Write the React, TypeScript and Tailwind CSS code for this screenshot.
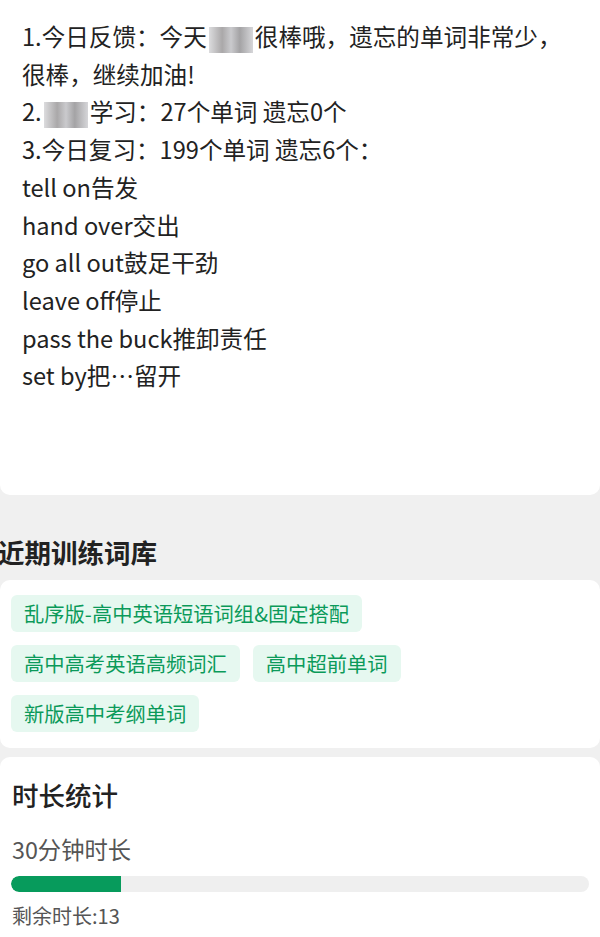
import React from 'react';

const reviewWords = [
  'tell on告发',
  'hand over交出',
  'go all out鼓足干劲',
  'leave off停止',
  'pass the buck推卸责任',
  'set by把…留开',
];

const wordBanks = ['乱序版-高中英语短语词组&固定搭配', '高中高考英语高频词汇', '高中超前单词', '新版高中考纲单词'];

// pixelated placeholder for the hidden name
const Blur: React.FC<{ w: number }> = ({ w }) => (
  <span
    className="inline-block align-middle h-[26px] mx-[2px] bg-[linear-gradient(90deg,#dcdcde_0%,#aaa8a9_30%,#cacacd_50%,#a4a3a5_70%,#d6d6d9_100%)]"
    style={{ width: w }}
  />
);

export default function App() {
  const used = 19;

  return (
    <div className="min-h-[937px] bg-[#f0f0f0] font-['Noto_Sans_CJK_SC',sans-serif] text-[#222]">
      <div className="h-[495px] bg-white rounded-b-[10px] px-[22px] pt-[18px] text-[23.6px] leading-[37.7px]">
        <div>
          1.今日反馈：今天<Blur w={44} />很棒哦，遗忘的单词非常少，
          <br />
          很棒，继续加油!
        </div>
        <div>
          2.<Blur w={44} />学习：27个单词 遗忘0个
        </div>
        <div>3.今日复习：199个单词 遗忘6个：</div>
        {reviewWords.map(w => (
          <div key={w}>{w}</div>
        ))}
      </div>

      <div className="h-[85px] flex items-center pt-[28px]">
        <h2 className="ml-[-2px] text-[26.5px] font-bold text-[#222]">近期训练词库</h2>
      </div>

      <div className="bg-white rounded-[10px] px-[11px] pt-[15px] pb-[16px] flex flex-wrap gap-x-[13px] gap-y-[13px]">
        {wordBanks.map(b => (
          <span key={b} className="bg-[#e6f8f0] text-[#0b9a5a] text-[20.3px] leading-[37px] px-[13px] rounded-[6px]">
            {b}
          </span>
        ))}
      </div>

      <div className="mt-[9px] bg-white rounded-t-[10px] px-[11px] pt-[20px] pb-[10px]">
        <div className="text-[26.5px] font-medium leading-[36px] pl-[1px] text-[#222]">时长统计</div>
        <div className="mt-[20px] text-[23.3px] leading-[32px] pl-[1px] text-[#555]">30分钟时长</div>
        <div className="mt-[11px] h-[16px] rounded-full bg-[#efefef] overflow-hidden">
          <div className="h-full bg-[#079b5c] rounded-l-full" style={{ width: `${used}%` }} />
        </div>
        <div className="mt-[10px] text-[20px] leading-[28px] pl-[1px] text-[#555]">剩余时长:13</div>
      </div>
    </div>
  );
}
